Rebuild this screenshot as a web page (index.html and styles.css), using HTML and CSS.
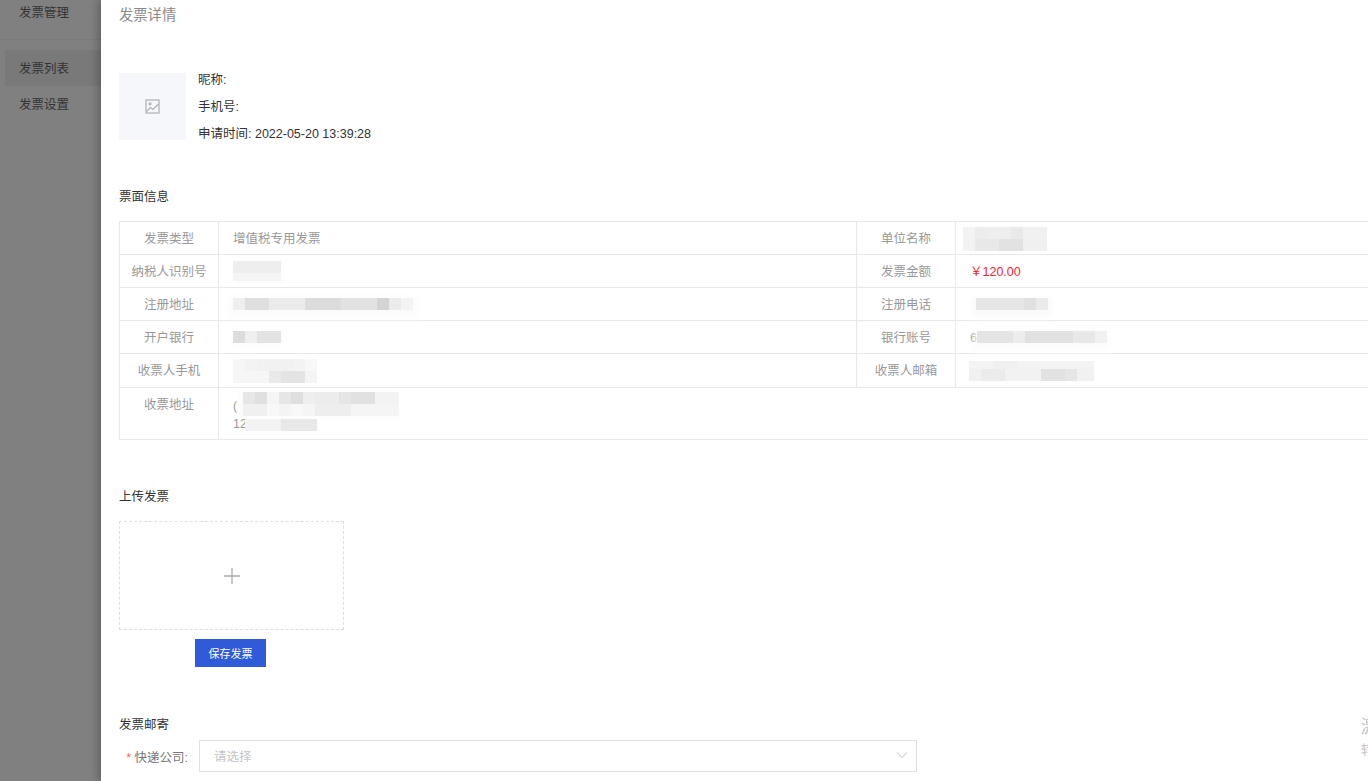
FILE: index.html
```html
<!DOCTYPE html>
<html lang="en">
<head>
    <meta charset="UTF-8">
    <title>发票详情</title>
    <link rel="stylesheet" href="styles.css">
</head>
<body>
<div class="page">
    <div class="side">
        <div class="side_head">发票管理</div>
        <ul class="side_menu">
            <li class="active">发票列表</li>
            <li>发票设置</li>
        </ul>
    </div>
    <div class="drawer">
        <h2 class="drawer_title">发票详情</h2>
        <div class="user">
            <div class="avatar">
                <svg width="15" height="15" viewBox="0 0 15 15" fill="none" stroke="#aeb0b5" stroke-width="1.2">
                    <rect x="1" y="1" width="13" height="13"></rect>
                    <path d="M1.5 12.5 L5.5 8.5 L8 10.5 L13.5 5"></path>
                    <circle cx="5" cy="4.8" r="1"></circle>
                </svg>
            </div>
            <div class="user_info">
                <p>昵称:</p>
                <p>手机号:</p>
                <p>申请时间: 2022-05-20 13:39:28</p>
            </div>
        </div>
        <h3 class="section section_first">票面信息</h3>
        <table class="info">
            <colgroup>
                <col class="col_label">
                <col class="col_value">
                <col class="col_label">
                <col class="col_rest">
            </colgroup>
            <tr>
                <th>发票类型</th>
                <td>增值税专用发票</td>
                <th>单位名称</th>
                <td><span class="blur blur_a"></span></td>
            </tr>
            <tr>
                <th>纳税人识别号</th>
                <td><span class="blur blur_b"></span></td>
                <th>发票金额</th>
                <td class="money">￥120.00</td>
            </tr>
            <tr>
                <th>注册地址</th>
                <td><span class="blur blur_c"></span></td>
                <th>注册电话</th>
                <td><span class="blur blur_d"></span></td>
            </tr>
            <tr>
                <th>开户银行</th>
                <td><span class="blur blur_e"></span></td>
                <th>银行账号</th>
                <td>6<span class="blur blur_f"></span></td>
            </tr>
            <tr class="row_tall">
                <th>收票人手机</th>
                <td><span class="blur blur_g"></span></td>
                <th>收票人邮箱</th>
                <td><span class="blur blur_h"></span></td>
            </tr>
            <tr class="row_addr">
                <th>收票地址</th>
                <td colspan="3">
                    <div class="addr_line">(<span class="blur blur_i"></span></div>
                    <div class="addr_line">12<span class="blur blur_j"></span></div>
                </td>
            </tr>
        </table>
        <h3 class="section section_upload">上传发票</h3>
        <div class="upload">
            <svg width="18" height="18" viewBox="0 0 18 18" stroke="#a9abb0" stroke-width="1.3">
                <path d="M9 1 V17 M1 9 H17"></path>
            </svg>
        </div>
        <div class="save_row"><button class="save">保存发票</button></div>
        <h3 class="section section_mail">发票邮寄</h3>
        <div class="form_row">
            <label class="form_label"><i>*</i> 快递公司:</label>
            <div class="select">
                <span>请选择</span>
                <svg width="12" height="8" viewBox="0 0 12 8" fill="none" stroke="#b9bcc3" stroke-width="1">
                    <path d="M1 1.5 L6 6.5 L11 1.5"></path>
                </svg>
            </div>
        </div>
    </div>
    <div class="watermark">
        <p class="wm_big">激活 Windows</p>
        <p class="wm_small">转到"设置"以激活 Windows。</p>
    </div>
</div>
</body>
</html>
```

FILE: styles.css
```css
*{margin: 0;padding: 0;box-sizing: border-box}
html,body{
    height: 100%;
    overflow: hidden;
}
body{
    font-family: "Liberation Sans", "Noto Sans CJK SC", sans-serif;
    font-size: 12.5px;
    color: #333;
    background: #fff;
}
.page{
    position: relative;
    display: flex;
    width: 1368px;
    height: 781px;
    overflow: hidden;
}
.side{
    flex: none;
    width: 101px;
    background: #808080;
    color: #333;
}
.side_head{
    height: 40px;
    padding: 4px 0 0 19px;
    line-height: 18px;
    border-bottom: 1px solid #7a7a7a;
}
.side_menu{
    list-style: none;
    margin: 10px 0 0 5px;
}
.side_menu li{
    height: 36px;
    line-height: 36px;
    padding: 1px 0 0 14px;
}
.side_menu .active{
    background: #797979;
}
.drawer{
    flex: none;
    width: 1267px;
    height: 781px;
    padding-left: 18px;
    background: #fff;
    box-shadow: -3px 0 8px rgba(0,0,0,0.25);
    overflow: hidden;
}
.drawer_title{
    font-size: 14.3px;
    font-weight: normal;
    line-height: 18px;
    padding-top: 6px;
    height: 24px;
    color: #8a8a8a;
}
.user{
    display: flex;
    margin-top: 49px;
}
.avatar{
    display: flex;
    align-items: center;
    justify-content: center;
    width: 67px;
    height: 67px;
    background: #f5f7fa;
}
.user_info{
    margin-left: 12px;
}
.user_info p{
    height: 27px;
    line-height: 14px;
}
.section{
    font-size: 12.5px;
    font-weight: normal;
    line-height: 16px;
    color: #333;
}
.section_first{
    margin-top: 35px;
}
.section_upload{
    margin-top: 49px;
}
.section_mail{
    margin-top: 50px;
}
.info{
    width: 1300px;
    margin-top: 16px;
    border-collapse: collapse;
    table-layout: fixed;
    color: #999;
}
.col_label{
    width: 99px;
}
.col_value{
    width: 638px;
}
.info th,
.info td{
    height: 33px;
    padding-top: 1px;
    border: 1px solid #e8e8e8;
    font-weight: normal;
    line-height: 16px;
}
.info td{
    padding-left: 14px;
    white-space: nowrap;
}
.row_tall th,
.row_tall td{
    height: 34px;
}
.row_addr th,
.row_addr td{
    height: 52px;
    vertical-align: top;
    padding-top: 9px;
}
.addr_line{
    height: 18px;
    line-height: 18px;
}
.money{
    color: #f5222d;
}
/* 打码的色块 */
.blur{
    display: inline-block;
    vertical-align: middle;
}
.blur_a{
    width: 84px;
    height: 24px;
    margin-left: -7px;
    background:
        linear-gradient(90deg, #f3f3f3 0 12px, #ececec 12px 24px, #eeeeee 24px 48px, #e9e9e9 48px 60px, #f1f1f1 60px) top/100% 12px no-repeat,
        linear-gradient(90deg, #f2f2f2 0 12px, #e8e8e8 12px 36px, #e2e2e2 36px 60px, #f0f0f0 60px) bottom/100% 12px no-repeat;
}
.blur_b{
    width: 48px;
    height: 20px;
    margin-top: -2px;
    box-shadow: 2px 1px 5px 1px #fcfcfc;
    background: linear-gradient(180deg, #eeeeee 0 12px, #f5f5f5 12px);
}
.blur_c{
    width: 180px;
    height: 12px;
    margin-top: -2px;
    box-shadow: 0 3px 8px 4px #fbfbfb;
    background: linear-gradient(90deg, #efefef 0 12px, #dfdfdf 12px 36px, #ebebeb 36px 72px, #dcdcdc 72px 108px, #e2e2e2 108px 144px, #d4d4d4 144px 156px, #ebebeb 156px 168px, #f3f3f3 168px);
}
.blur_d{
    width: 72px;
    height: 12px;
    margin: -2px 0 0 6px;
    box-shadow: 0 3px 6px 4px #fafafa;
    background: linear-gradient(90deg, #e6e6e6 0 48px, #e0e0e0 48px 60px, #ebebeb 60px);
}
.blur_e{
    width: 48px;
    height: 12px;
    margin-top: -2px;
    box-shadow: 0 2px 5px 2px #fcfcfc;
    background: linear-gradient(90deg, #dddddd 0 12px, #efefef 12px 24px, #e3e3e3 24px);
}
.blur_f{
    width: 130px;
    height: 12px;
    margin-top: -2px;
    box-shadow: 0 3px 8px 3px #fbfbfb;
    background: linear-gradient(90deg, #e4e4e4 0 36px, #ececec 36px 48px, #e1e1e1 48px 96px, #e8e8e8 96px 118px, #f1f1f1 118px);
}
.blur_g{
    width: 84px;
    height: 24px;
    background:
        linear-gradient(90deg, #f6f6f6 0 12px, #f3f3f3 12px 24px, #f1f1f1 24px 60px, #f3f3f3 60px 72px, #f8f8f8 72px) top/100% 12px no-repeat,
        linear-gradient(90deg, #f6f6f6 0 36px, #e9e9e9 36px 48px, #e4e4e4 48px 72px, #f4f4f4 72px) bottom/100% 12px no-repeat;
}
.blur_h{
    width: 125px;
    height: 20px;
    margin-left: -1px;
    background:
        linear-gradient(90deg, #f3f3f3 0 24px, #f0f0f0 24px 48px, #f3f3f3 48px) top/100% 8px no-repeat,
        linear-gradient(90deg, #f1f1f1 0 12px, #ebebeb 12px 36px, #f2f2f2 36px 72px, #e2e2e2 72px 96px, #e6e6e6 96px 108px, #f0f1f3 108px) bottom/100% 12px no-repeat;
}
.blur_i{
    width: 156px;
    height: 24px;
    margin: -5px 0 0 6px;
    box-shadow: -3px 1px 5px 1px #fbfbfb;
    background:
        linear-gradient(90deg, #e6e6e6 0 12px, #e0e0e0 12px 24px, #f5f5f5 24px 36px, #e6e6e6 36px 48px, #dfdfdf 48px 60px, #eeeeee 60px 72px, #ececec 72px 96px, #e6e6e6 96px 108px, #e1e1e1 108px 132px, #f3f3f3 132px) top/100% 12px no-repeat,
        linear-gradient(90deg, #f0f0f0 0 24px, #f8f8f8 24px 36px, #f4f4f4 36px 48px, #f8f8f8 48px 60px, #f5f5f5 60px 72px, #eeeeee 72px 108px, #f5f5f5 108px) bottom/100% 12px no-repeat;
}
.blur_j{
    width: 72px;
    height: 12px;
    margin-left: -2px;
    background: linear-gradient(90deg, #f2f2f2 0 36px, #e8e8e8 36px);
}
.upload{
    display: flex;
    align-items: center;
    justify-content: center;
    width: 225px;
    height: 109px;
    margin-top: 16px;
    border: 1px dashed #dcdee2;
}
.save_row{
    margin: 9px 0 0 76px;
}
.save{
    display: block;
    width: 71px;
    height: 28px;
    border: 0;
    background: #2f5bd8;
    color: #fff;
    font-family: inherit;
    font-size: 11px;
}
.form_row{
    display: flex;
    align-items: center;
    margin-top: 7px;
}
.form_label{
    width: 70px;
    padding-right: 1px;
    text-align: right;
    color: #777;
}
.form_label i{
    font-style: normal;
    color: #f5616d;
}
.select{
    display: flex;
    align-items: center;
    justify-content: space-between;
    width: 718px;
    height: 32px;
    margin-left: 10px;
    padding: 0 8px 2px 14px;
    border: 1px solid #dfe1e8;
    color: #c3c5c9;
}
.watermark{
    position: absolute;
    left: 1361px;
    top: 715px;
    width: 300px;
    color: #c4c4c4;
}
.wm_big{
    font-size: 18px;
    line-height: 24px;
}
.wm_small{
    font-size: 13px;
    line-height: 18px;
    margin-top: 2px;
}
```
